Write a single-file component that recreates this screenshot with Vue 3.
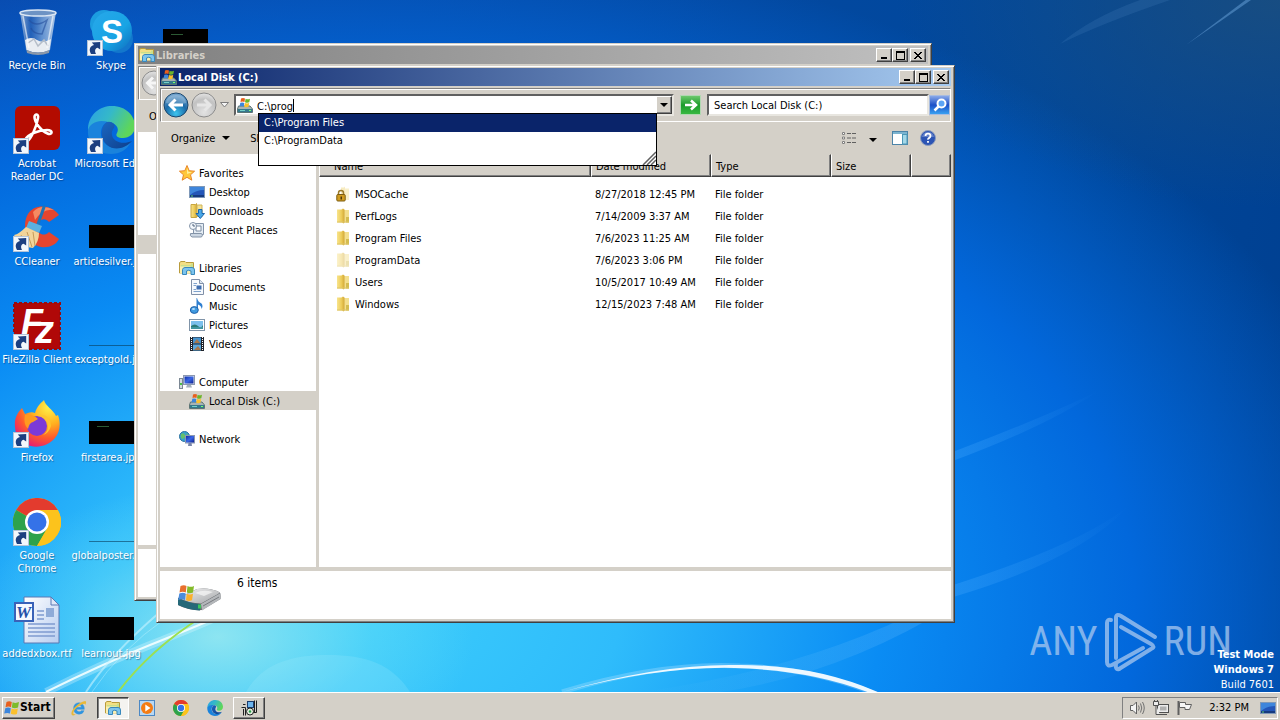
<script setup>
import { ref } from 'vue';

const address = ref('C:\\prog');
const search = ref('Search Local Disk (C:)');

const suggestions = ['C:\\Program Files', 'C:\\ProgramData'];
const activeSuggestion = ref(0);

const desktopIcons = [
  { label: 'Recycle Bin', icon: 'bin' },
  { label: 'Acrobat\nReader DC', icon: 'acrobat', shortcut: true },
  { label: 'CCleaner', icon: 'ccleaner', shortcut: true },
  { label: 'FileZilla Client', icon: 'filezilla', shortcut: true },
  { label: 'Firefox', icon: 'firefox', shortcut: true },
  { label: 'Google\nChrome', icon: 'chrome', shortcut: true },
  { label: 'addedxbox.rtf', icon: 'word' },
  { label: 'Skype', icon: 'skype', shortcut: true },
  { label: 'Microsoft Edge', icon: 'edge', shortcut: true },
  { label: 'articlesilver.jpg', thumb: 'dark' },
  { label: 'exceptgold.jpg', thumb: 'line' },
  { label: 'firstarea.jpg', thumb: 'dark', mark: true },
  { label: 'globalposter.jpg', thumb: 'line' },
  { label: 'learnout.jpg', thumb: 'dark' },
  { label: '', thumb: 'dark', mark: true }
];

const places = [
  {
    label: 'Favorites',
    icon: 'star',
    children: [
      { label: 'Desktop', icon: 'desktop' },
      { label: 'Downloads', icon: 'downloads' },
      { label: 'Recent Places', icon: 'recent' }
    ]
  },
  {
    label: 'Libraries',
    icon: 'libraries',
    children: [
      { label: 'Documents', icon: 'document' },
      { label: 'Music', icon: 'music' },
      { label: 'Pictures', icon: 'picture' },
      { label: 'Videos', icon: 'video' }
    ]
  },
  {
    label: 'Computer',
    icon: 'computer',
    children: [{ label: 'Local Disk (C:)', icon: 'disk', selected: true }]
  },
  { label: 'Network', icon: 'network', children: [] }
];

const files = [
  { name: 'MSOCache', date: '8/27/2018 12:45 PM', icon: 'folder-lock' },
  { name: 'PerfLogs', date: '7/14/2009 3:37 AM', icon: 'folder' },
  { name: 'Program Files', date: '7/6/2023 11:25 AM', icon: 'folder' },
  { name: 'ProgramData', date: '7/6/2023 3:06 PM', icon: 'folder', hidden: true },
  { name: 'Users', date: '10/5/2017 10:49 AM', icon: 'folder' },
  { name: 'Windows', date: '12/15/2023 7:48 AM', icon: 'folder' }
];

const quickLaunch = [
  { label: 'Internet Explorer', icon: 'ie' },
  { label: 'Windows Explorer', icon: 'libraries', state: 'pressed' },
  { label: 'Windows Media Player', icon: 'wmp' },
  { label: 'Google Chrome', icon: 'chrome' },
  { label: 'Microsoft Edge', icon: 'edge' },
  { label: 'Setup', icon: 'setup', state: 'raised' }
];

const pickSuggestion = (index) => {
  activeSuggestion.value = index;
  address.value = suggestions[index];
};
</script>

<template>
  <div class="screen">
    <!-- Shared icon shapes -->
    <svg class="sprite" width="0" height="0" aria-hidden="true">
      <defs>
        <linearGradient id="g-glass" x1="0" x2="1" y1="0" y2="0">
          <stop offset="0" stop-color="#b9cbe0" stop-opacity=".8" />
          <stop offset=".3" stop-color="#3c6cb4" stop-opacity=".5" />
          <stop offset=".6" stop-color="#9ab8dc" stop-opacity=".6" />
          <stop offset="1" stop-color="#dbe6f2" stop-opacity=".8" />
        </linearGradient>
        <linearGradient id="g-skype" x1="0" x2="1" y1="0" y2="1">
          <stop offset="0" stop-color="#28a8ea" />
          <stop offset=".6" stop-color="#18a4e4" />
          <stop offset="1" stop-color="#0f6cbd" />
        </linearGradient>
        <linearGradient id="g-edge" x1="0" x2="1" y1="0" y2=".4">
          <stop offset="0" stop-color="#2a9fe6" />
          <stop offset=".5" stop-color="#35b9c8" />
          <stop offset="1" stop-color="#5ed65a" />
        </linearGradient>
        <linearGradient id="g-edge-low" x1="0" x2="1" y1="0" y2="1">
          <stop offset="0" stop-color="#1b66c0" />
          <stop offset="1" stop-color="#0d3f8c" />
        </linearGradient>
        <radialGradient id="g-fox" cx=".75" cy=".15" r=".95">
          <stop offset="0" stop-color="#fff24a" />
          <stop offset=".4" stop-color="#ffb01f" />
          <stop offset=".7" stop-color="#ff5a2c" />
          <stop offset="1" stop-color="#e3197a" />
        </radialGradient>
        <linearGradient id="g-folder" x1="0" x2="1" y1="0" y2="0">
          <stop offset="0" stop-color="#f8e48c" />
          <stop offset=".6" stop-color="#eccb58" />
          <stop offset="1" stop-color="#d2a838" />
        </linearGradient>
        <linearGradient id="g-screen" x1="0" x2="1" y1="0" y2="1">
          <stop offset="0" stop-color="#0f2fa8" />
          <stop offset=".5" stop-color="#3b67e6" />
          <stop offset="1" stop-color="#0c1f8e" />
        </linearGradient>
        <linearGradient id="g-metal" x1="0" x2="1" y1="0" y2="1">
          <stop offset="0" stop-color="#f4f4f4" />
          <stop offset="1" stop-color="#a4a6a9" />
        </linearGradient>
        <radialGradient id="g-nav" cx=".5" cy=".85" r=".9">
          <stop offset="0" stop-color="#3cc4ee" />
          <stop offset=".5" stop-color="#1c6aa8" />
          <stop offset="1" stop-color="#8ab4d8" />
        </radialGradient>
        <radialGradient id="g-nav-off" cx=".5" cy=".8" r=".9">
          <stop offset="0" stop-color="#e2e2e2" />
          <stop offset=".6" stop-color="#c2c2c2" />
          <stop offset="1" stop-color="#f2f2f2" />
        </radialGradient>
        <linearGradient id="g-word" x1="0" x2="1" y1="0" y2="1">
          <stop offset="0" stop-color="#ffffff" />
          <stop offset="1" stop-color="#b8cdf0" />
        </linearGradient>
        <linearGradient id="g-beam" x1="0" x2="1" y1="0" y2="0">
          <stop offset="0" stop-color="#9cd8ff" stop-opacity="0" />
          <stop offset="1" stop-color="#7cc8ff" stop-opacity=".22" />
        </linearGradient>
        <linearGradient id="g-beam-out" x1="0" x2="1" y1="0" y2="0">
          <stop offset="0" stop-color="#4cacff" stop-opacity=".3" />
          <stop offset="1" stop-color="#4cacff" stop-opacity="0" />
        </linearGradient>

        <symbol id="i-flag" viewBox="0 0 16 16">
          <path d="M2.500 2Q5 .5 7.800 1.900L7 7.200Q4.500 6 1.500 7.300Z" fill="#e8601e" />
          <path d="M8.600 2.200Q11.500 3.700 15 2.100L14 7.600Q10.500 9 7.800 7.500Z" fill="#7dbb2a" />
          <path d="M1.300 8.200Q4 7 6.800 8.200L6 13.500Q3.300 12.300 .2 13.500Z" fill="#3c86dc" />
          <path d="M7.600 8.500Q10.400 10 13.800 8.500L12.900 13.900Q9.500 15.300 6.800 13.800Z" fill="#fbc02c" />
        </symbol>

        <symbol id="i-shortcut" viewBox="0 0 16 16">
          <rect x=".5" y=".5" width="15" height="15" fill="#f3f7fc" stroke="#b4c4d8" />
          <path d="M4 14C1.500 9.500 3 6 7 5L4.800 2.500L13.200 2L13.200 9.500L10.600 7.800C8 8.500 7.400 11 9 14Z" fill="#1d3f80" />
        </symbol>

        <symbol id="i-bin" viewBox="0 0 48 48">
          <path d="M7 4H43L37 42Q25 48 13 42Z" fill="url(#g-glass)" />
          <path d="M12 32Q18 28 24 32T38 31L36.500 42Q25 47 13.500 42Z" fill="#e9edf2" />
          <path d="M15 35L21 31L25 38L31 32L35 38" fill="none" stroke="#b5bdc8" stroke-width="1.500" />
          <ellipse cx="25" cy="5" rx="18" ry="3" fill="#6d93c4" stroke="#dce7f4" stroke-width="1.500" />
          <path d="M13.500 42Q25 47 36.500 42L36 45Q25 49 14 45Z" fill="#8c98a8" />
          <path d="M16 12Q23 20 34 12L29 26Q20 26 18 20" fill="none" stroke="#244f9c" stroke-opacity=".6" stroke-width="1.500" />
          <path d="M10 8L16 40M40 8L34 40" stroke="#fff" stroke-opacity=".6" stroke-width="1.500" />
        </symbol>

        <symbol id="i-acrobat" viewBox="0 0 48 48">
          <rect x="2" y="0" width="45" height="44" rx="6" fill="#b30b00" />
          <path d="M12 34C15 28 26 24 34 24C41 24 39 29.500 34.500 27.500C28 25 21.500 16 21.500 11C21.500 7.500 26 7.500 25 12C23.500 21 18 33 14 35.500C12 36.500 11 35.500 12 34Z" fill="none" stroke="#fff" stroke-width="2.600" />
        </symbol>

        <symbol id="i-ccleaner" viewBox="0 0 48 48">
          <path d="M46 11C38 0 21 0 15 10C8 22 14 40 28 43C36 44 43 41 46 35L36 28C31 33 25 30 24 24C23 17 31 12 36 18Z" fill="#e5452f" />
          <path d="M20 8Q28 -1 41 6Q30 4 22 16Z" fill="#f58a62" />
          <path d="M31 3L25 20" stroke="#1d74b8" stroke-width="3" stroke-linecap="round" />
          <path d="M16 17L29 22L26 29L13 24Z" fill="#5ab0e0" />
          <path d="M13 23Q6 30 1 31Q8 44 20 44Q26 38 26 29Z" fill="#f2d49a" />
          <path d="M8 31L14 42M14 28L19 43M20 28L22 42" stroke="#c79a58" />
        </symbol>

        <symbol id="i-filezilla" viewBox="0 0 48 48">
          <rect x="1" y="1" width="46" height="46" fill="#b00808" stroke="#9c0a0a" stroke-width="2" stroke-dasharray="3 2" />
          <text x="8" y="33" class="glyph-f">F</text>
          <text x="22" y="41" class="glyph-z">z</text>
        </symbol>

        <symbol id="i-firefox" viewBox="0 0 48 48">
          <path d="M2 27C1 18 5 12 9 8L12 14Q18 11 22 13C24 6 28 3 31 0C32 6 40 9 43 16L45 15C48 23 47 32 42 38C32 50 13 49 5 38Q2 33 2 27Z" fill="url(#g-fox)" />
          <circle cx="24" cy="26" r="10" fill="#7b3ad8" />
          <path d="M12 15Q19 13 25 19L20 22Q16 23 15 29Q10 24 12 15Z" fill="#ff9a1f" />
          <path d="M24 16Q34 16 35 26Q35 32 30 35Q36 33 38 26Q38 18 31 15Z" fill="#ffc52f" />
        </symbol>

        <symbol id="i-chrome" viewBox="0 0 48 48">
          <circle cx="24" cy="24" r="24" fill="#fbc116" />
          <path d="M24 24L3.200 12A24 24 0 0 1 44.800 12Z" fill="#e33b2e" />
          <path d="M24 24L3.200 12A24 24 0 0 0 24 48L34.400 30Z" fill="#2da24c" />
          <path d="M24 12H44.800A24 24 0 0 1 24 48L34.400 30Z" fill="#fcc31c" />
          <circle cx="24" cy="24" r="12" fill="#fff" />
          <circle cx="24" cy="24" r="9.500" fill="#3572e8" />
        </symbol>

        <symbol id="i-word" viewBox="0 0 48 48">
          <path d="M11 1H38L46 9V47H11Z" fill="url(#g-word)" stroke="#5a78b4" />
          <path d="M38 1V9H46Z" fill="#dfe8f8" stroke="#5a78b4" />
          <path d="M24 15H31M24 19H31M24 23H31M15 28H42M15 32H42M15 36H42M15 40H42" stroke="#7f9ad0" stroke-width="1.500" />
          <rect x="33" y="12" width="8" height="9" fill="#8fabd8" />
          <rect x="2" y="7" width="18" height="18" fill="#f6f9ff" stroke="#3a62b8" stroke-width="2" />
          <text x="3" y="22" class="glyph-w">W</text>
        </symbol>

        <symbol id="i-skype" viewBox="0 0 48 48">
          <circle cx="17" cy="16" r="14" fill="#1c9de0" />
          <circle cx="32" cy="31" r="14" fill="#1377cc" />
          <circle cx="25" cy="23" r="20" fill="url(#g-skype)" />
          <text x="25" y="35" class="glyph-s">S</text>
        </symbol>

        <symbol id="i-edge" viewBox="0 0 48 48">
          <path d="M1 22C2 8 13 0 25 0C39 0 48 10 48 20C48 28 42 32 36 32C31 32 28 30 30 27C33 22 28 16 21 16C11 15 4 19 1 26Z" fill="url(#g-edge)" />
          <path d="M1 24C3 17 12 13 20 16C14 19 12 28 16 35C22 44 35 44 44 36C40 44 33 48 24 48C10 48 0 37 1 24Z" fill="#1a83dc" />
          <path d="M20 16C13 20 13 33 20 39C27 45 38 43 45 35C36 39 26 36 25 29C24 23 29 22 27 18Q24 15 20 16Z" fill="url(#g-edge-low)" />
        </symbol>

        <symbol id="i-libraries" viewBox="0 0 16 16">
          <path d="M.5 2.500L2 1.500H6L7 2.500H14.500V13H.5Z" fill="#f3df84" stroke="#b99b3c" />
          <path d="M2 5H12V3.500H14V10H2Z" fill="#c9df8c" />
          <path d="M1 6.500H11.500L12 13.500H1Z" fill="#fbf0b2" />
          <path d="M3.500 14.500V9.500Q4 7.500 6 7.500H13Q15.500 7.500 15.500 10V14.500H12V11Q9.500 9.500 7.500 11V14.500Z" fill="#7cc4ee" stroke="#3888bc" />
        </symbol>

        <symbol id="i-disk" viewBox="0 0 16 16">
          <path d="M1.500 9H13L15.500 12V15.500H.5V12Z" fill="#a8b4b4" stroke="#5c7474" />
          <rect x="1" y="12" width="14" height="3" fill="#35798c" />
          <path d="M3 13.500H8" stroke="#74d0c8" />
          <rect x="12" y="13" width="2" height="1" fill="#7cff6c" />
          <path d="M4 1.500Q6 .5 8 1.500L7.500 5Q5.500 4.200 3.500 5Z" fill="#e8601e" />
          <path d="M8.600 1.700Q10.500 2.700 13 1.700L12.300 5.300Q10.200 6.200 8 5.200Z" fill="#6cb52a" />
          <path d="M3.300 5.800Q5.300 5 7.300 5.900L6.800 9.400Q4.800 8.600 2.600 9.400Z" fill="#3c86dc" />
          <path d="M7.900 6.100Q10 7 12.200 6.100L11.500 9.800Q9.400 10.700 7.200 9.700Z" fill="#fbc02c" />
        </symbol>

        <symbol id="i-star" viewBox="0 0 16 16">
          <path d="M8 .5L10.200 5.700L15.600 6.200L11.500 9.800L12.800 15.200L8 12.300L3.200 15.200L4.500 9.800L.4 6.200L5.800 5.700Z" fill="#ffc83c" stroke="#e8862a" />
          <path d="M8 3L9.300 6.700L13 7.200L8 9Z" fill="#fff09a" />
        </symbol>

        <symbol id="i-desktop" viewBox="0 0 16 16">
          <rect x=".5" y="2.500" width="15" height="11" fill="#2456b8" stroke="#7e98b8" />
          <path d="M1 3H15V6Q7 6 1 11Z" fill="#3f86dc" />
          <path d="M1 12H15" stroke="#163a80" stroke-width="2" />
          <path d="M2 12H4" stroke="#5dd070" />
        </symbol>

        <symbol id="i-downloads" viewBox="0 0 16 16">
          <path d="M2 1.500H6.500L7.500 .5V14.500H2Z" fill="url(#g-folder)" stroke="#c8a640" />
          <path d="M8 2H13V13.500H8Z" fill="#f4e294" stroke="#d0b458" />
          <path d="M9.500 6.500H13V10.500H15.500L11.300 15.500L7 10.500H9.500Z" fill="#4aa8e8" stroke="#1c66ac" />
        </symbol>

        <symbol id="i-recent" viewBox="0 0 16 16">
          <path d="M4.500 1.500H14.500V12.500H4.500Z" fill="#e4ecf4" stroke="#8494a8" />
          <path d="M1.500 11.500H12.500Q14.500 13 12.500 15H3Q.5 14 1.500 11.500Z" fill="#cbd6e2" stroke="#8494a8" />
          <path d="M7 4H12V9H7Z" fill="#fff" stroke="#788aa0" />
          <circle cx="4" cy="4" r="3.500" fill="#f4f8fc" stroke="#8494a8" />
          <path d="M4 2V4H6" fill="none" stroke="#50647c" />
        </symbol>

        <symbol id="i-document" viewBox="0 0 16 16">
          <path d="M2.500 .5H10.500L14.500 4.500V15.500H2.500Z" fill="#f6f9fd" stroke="#8090a8" />
          <path d="M10.500 .5V4.500H14.500" fill="#dbe5f1" stroke="#8090a8" />
          <path d="M4.500 4.500H8M4.500 6.500H7M4.500 12.500H12M4.500 10.500H7" stroke="#7fa2cc" />
          <rect x="7.500" y="6.500" width="5" height="4" fill="#3d6db0" />
        </symbol>

        <symbol id="i-music" viewBox="0 0 16 16">
          <path d="M8 0Q9 4 12.500 5.500Q14.500 8 12.500 11Q12.500 7.500 9 6.500V12.500H7.500V0Z" fill="#2f7fd0" />
          <ellipse cx="5.300" cy="12" rx="4" ry="3.400" fill="#3f9ae0" stroke="#2260a8" />
          <ellipse cx="4.500" cy="11" rx="1.500" ry="1" fill="#b8e0ff" />
        </symbol>

        <symbol id="i-picture" viewBox="0 0 16 16">
          <rect x=".5" y="2.500" width="15" height="11" fill="#fff" stroke="#8094a8" />
          <rect x="2" y="4" width="12" height="8" fill="#7cc0ec" />
          <path d="M2 9Q6 6 9 9T14 8V12H2Z" fill="#2c7c78" />
          <path d="M2 11H14" stroke="#55b0c8" />
        </symbol>

        <symbol id="i-video" viewBox="0 0 16 16">
          <rect x="1" y="1" width="14" height="14" fill="#20242c" />
          <rect x="4" y="1.500" width="8" height="6" fill="#4694d0" />
          <rect x="4" y="8.500" width="8" height="6" fill="#5ca8dc" />
          <path d="M5 7L8 3L11 7ZM5 14L9 10L12 14Z" fill="#a8784c" />
          <path d="M2.500 1V15M13.500 1V15" stroke="#fff" stroke-dasharray="1 1" />
        </symbol>

        <symbol id="i-computer" viewBox="0 0 16 16">
          <rect x=".5" y="4.500" width="3" height="10" fill="#d4dae0" stroke="#7c8894" />
          <rect x="1" y="9" width="2" height="2" fill="#48c048" />
          <rect x="4.500" y="1.500" width="11" height="9" fill="#dfe4ec" stroke="#8c98b0" />
          <rect x="5.500" y="2.500" width="9" height="7" fill="url(#g-screen)" />
          <path d="M8 11H12L13 13.500H7Z" fill="#a4b0bc" />
        </symbol>

        <symbol id="i-network" viewBox="0 0 16 16">
          <circle cx="5.500" cy="5.500" r="5" fill="#38a0d0" stroke="#2870a0" />
          <path d="M2 3Q5 1 6 4T3 8Q1 6 2 3ZM7 2Q10 3 9 6Z" fill="#64c06c" />
          <rect x="6.500" y="4.500" width="9" height="7.500" fill="#dfe4ec" stroke="#8c98b0" />
          <rect x="7" y="5" width="8" height="6.500" fill="url(#g-screen)" />
          <path d="M9.500 12H12.500L13 15H9Z" fill="#7884a8" />
        </symbol>

        <symbol id="i-folder" viewBox="0 0 16 16">
          <path d="M8 2H14V14.500H8Z" fill="#f3df8e" />
          <path d="M11 9H14V14.500H11Z" fill="#d4bc50" />
          <path d="M2 1.500H6.500L8 .5L9.500 1.500V14.500L8.500 15.500L7 14.500H2Z" fill="url(#g-folder)" />
          <path d="M2 14H14" stroke="#dcc468" />
        </symbol>

        <symbol id="i-folder-lock" viewBox="0 0 16 16">
          <g opacity=".45">
            <path d="M6 1.500H9L10 .5V14H6Z" fill="#eed476" />
            <path d="M10 2.500H14V14H10Z" fill="#f2de8c" />
          </g>
          <path d="M3.500 9V7Q3.500 4.500 6 4.500T8.500 7V9" fill="none" stroke="#9c7c2c" stroke-width="1.500" />
          <rect x="1.800" y="8.500" width="8.400" height="6.500" rx="1" fill="#d09c20" stroke="#7c5c10" />
          <rect x="5.500" y="10.500" width="1.500" height="3" fill="#4c380c" />
        </symbol>

        <symbol id="i-ie" viewBox="2 1 17 18">
          <path d="M16.500 11.500H7.500Q8 14.300 10.500 14.300Q12.300 14.300 13 13H16.200Q14.800 17 10.500 17Q4.500 16.500 4.300 10.500Q4.700 4.300 10.500 4Q16.500 4.500 16.500 11.500ZM7.600 9.200H13.300Q12.800 6.800 10.500 6.700Q8.100 6.800 7.600 9.200Z" fill="#2f94e0" stroke="#2f94e0" stroke-width=".5" />
          <path d="M2.500 18Q.5 15 6 9T17.500 2Q19.500 3 17.500 6.500Q17.500 3.500 11 7.500T4 16Q4.500 17.500 7 17Q4 19 2.500 18Z" fill="#e8b838" />
        </symbol>

        <symbol id="i-wmp" viewBox="0 0 16 16">
          <rect x=".5" y=".5" width="15" height="15" fill="#b8d8f4" stroke="#4c88c4" />
          <circle cx="8" cy="8" r="6" fill="#f47c14" />
          <path d="M6.300 4.500L11.500 8L6.300 11.500Z" fill="#fff" />
        </symbol>

        <symbol id="i-setup" viewBox="0 0 16 16">
          <rect x="6.500" y="1.500" width="6" height="6" fill="#6cb4ec" stroke="#1c3c6c" />
          <path d="M13.500 .5V12.500M15.500 .5V12.500H12M2 4.500H4.500M.5 7.500H4.500V15.500M2.500 9V15.500" fill="none" stroke="#202020" />
          <circle cx="9" cy="11.500" r="3.500" fill="#e0ecdc" stroke="#202020" />
          <circle cx="9" cy="11.500" r="1.200" fill="#28a048" />
        </symbol>
      </defs>
    </svg>

    <main class="desktop">
      <svg class="streaks" viewBox="0 0 1280 692" preserveAspectRatio="none" aria-hidden="true">
        <path d="M640 692Q820 668 955 592L955 604Q840 675 720 692Z" fill="url(#g-beam)" />
        <path d="M950 453Q1050 415 1100 390Q1050 425 950 462Z" fill="url(#g-beam-out)" />
        <path d="M950 586Q1080 545 1130 505Q1080 560 950 598Z" fill="url(#g-beam-out)" />
        <path d="M1060 44Q1090 18 1140 0H1170Q1100 24 1060 44Z" fill="#6aa4dc" fill-opacity=".14" />
        <path d="M1186 45L1247 -1L1251 0Z" fill="#6aa4dc" fill-opacity=".5" />
        <g fill="none">
          <path d="M46 692Q100 665 150 645T215 618" stroke="#eafcff" stroke-opacity=".3" stroke-width="8" />
          <path d="M46 692Q100 665 150 645T215 618" stroke="#f4ffff" stroke-opacity=".9" stroke-width="2" />
          <path d="M86 692Q110 655 160 612" stroke="#c8f4ff" stroke-opacity=".6" stroke-width="2" />
          <path d="M92 692Q120 650 166 618" stroke="#c8f4ff" stroke-opacity=".4" stroke-width="1" />
          <path d="M118 692Q150 650 200 618" stroke="#9ce050" stroke-width="2" />
          <path d="M562 692Q660 662 740 666Q812 668 876 694" stroke="#a8e0ff" stroke-opacity=".35" stroke-width="5" />
        </g>
        <path d="M562 692Q660 664 735 665Q815 664 880 693H870Q812 670 735 668Q660 666 562 692Z" fill="#fff" fill-opacity=".9" />
        <path d="M246 692C262 664 290 655 328 655S392 664 410 692Z" fill="#b8f0ff" fill-opacity=".16" />
      </svg>

      <ul class="icon-grid">
        <li v-for="(item, index) in desktopIcons" :key="index">
          <a class="desk-icon" href="#" :aria-label="item.label || 'Image'" @click.prevent>
            <span class="desk-art">
              <svg v-if="item.icon" class="art"><use :href="'#i-' + item.icon" /></svg>
              <span v-else class="thumb" :class="item.thumb">
                <i v-if="item.mark" class="mark"></i>
              </span>
              <svg v-if="item.shortcut" class="overlay"><use href="#i-shortcut" /></svg>
            </span>
            <span class="desk-label">{{ item.label }}</span>
          </a>
        </li>
      </ul>

      <!-- Background window -->
      <section class="window libraries-window" aria-label="Libraries">
        <header class="titlebar inactive">
          <svg class="icon"><use href="#i-libraries" /></svg>
          <h2>Libraries</h2>
          <div class="caption">
            <button aria-label="Minimize"><i class="cap-min"></i></button>
            <button aria-label="Maximize"><i class="cap-max"></i></button>
            <button class="close" aria-label="Close">
              <svg viewBox="0 0 8 7"><path d="M0 0L7 7M1 0L8 7M8 0L1 7M7 0L0 7" /></svg>
            </button>
          </div>
        </header>
        <div class="navband">
          <button class="round" aria-label="Back">
            <svg viewBox="0 0 26 26"><circle cx="13" cy="13" r="12" fill="url(#g-nav-off)" stroke="#8c8c8c" /><path d="M12 7.500L6.500 13L12 18.500M7 13H19" fill="none" stroke="#f6f6f6" stroke-width="3" /></svg>
          </button>
        </div>
        <div class="toolbar"><button class="text-button">Organize</button></div>
        <div class="back-body"><div class="back-row"></div></div>
        <div class="back-details"></div>
      </section>

      <!-- Foreground window -->
      <section class="window disk-window" aria-label="Local Disk (C:)">
        <header class="titlebar">
          <svg class="icon"><use href="#i-disk" /></svg>
          <h1>Local Disk (C:)</h1>
          <div class="caption">
            <button aria-label="Minimize"><i class="cap-min"></i></button>
            <button aria-label="Maximize"><i class="cap-max"></i></button>
            <button class="close" aria-label="Close">
              <svg viewBox="0 0 8 7"><path d="M0 0L7 7M1 0L8 7M8 0L1 7M7 0L0 7" /></svg>
            </button>
          </div>
        </header>

        <div class="navband">
          <button class="round" aria-label="Back">
            <svg viewBox="0 0 26 26"><circle cx="13" cy="13" r="12" fill="url(#g-nav)" stroke="#1c466c" /><path d="M3 11Q4 3 13 3T23 11Q13 14 3 11Z" fill="#fff" fill-opacity=".25" /><path d="M12.500 7.500L7 13L12.500 18.500M7.500 13H20" fill="none" stroke="#fff" stroke-width="3" /></svg>
          </button>
          <button class="round" aria-label="Forward">
            <svg viewBox="0 0 26 26"><circle cx="13" cy="13" r="12" fill="url(#g-nav-off)" stroke="#8c8c8c" /><path d="M13.500 7.500L19 13L13.500 18.500M18.500 13H6" fill="none" stroke="#e6e6e6" stroke-width="3" /></svg>
          </button>
          <button class="history" aria-label="Recent pages">
            <svg viewBox="0 0 9 6"><path d="M.5 .5H8.500L4.500 5Z" fill="#f4f4f4" stroke="#7c7c7c" /></svg>
          </button>

          <div class="address">
            <svg class="icon"><use href="#i-disk" /></svg>
            <input v-model="address" class="address-input" type="text" size="7" aria-label="Address" spellcheck="false" />
            <i class="caret"></i>
            <button class="combo" aria-label="Previous locations"><i class="down"></i></button>
            <ul class="suggest">
              <li v-for="(entry, index) in suggestions" :key="entry">
                <button :class="{ active: index === activeSuggestion }" @click="pickSuggestion(index)">{{ entry }}</button>
              </li>
              <li class="grip">
                <svg viewBox="0 0 14 14"><path d="M1 14L14 1M5 14L14 5M9 14L14 9" stroke="#606060" stroke-width="1.500" /></svg>
              </li>
            </ul>
          </div>

          <button class="go" aria-label="Go">
            <svg viewBox="0 0 16 14"><path d="M2 7H12M8 2.500L13 7L8 11.500" fill="none" stroke="#fff" stroke-width="2.500" /></svg>
          </button>
          <input v-model="search" class="search-input" type="text" aria-label="Search Local Disk (C:)" spellcheck="false" />
          <button class="search-button" aria-label="Search">
            <svg viewBox="0 0 16 16"><circle cx="9.500" cy="6.500" r="4" fill="#5ca4f4" stroke="#fff" stroke-width="2" /><path d="M6.500 9.500L2.500 13.500" stroke="#fff" stroke-width="2.500" /></svg>
          </button>
        </div>

        <div class="toolbar">
          <button class="text-button">Organize <i class="down"></i></button>
          <button class="text-button">Share with</button>
          <div class="tools">
            <button aria-label="Change your view">
              <svg width="16" height="14" viewBox="0 0 16 14"><path d="M1.500 1.500H3.500V3.500H1.500ZM1.500 6H3.500V8H1.500ZM1.500 10.500H3.500V12.500H1.500Z" fill="#fff" stroke="#808080" /><path d="M6 2.500H10M11 2.500H15M6 7H10M11 7H15M6 11.500H10M11 11.500H15" stroke="#606060" /></svg>
            </button>
            <button aria-label="More view options"><i class="down"></i></button>
            <button aria-label="Preview pane">
              <svg width="16" height="14" viewBox="0 0 16 14"><rect x=".5" y=".5" width="15" height="13" fill="#fff" stroke="#4c84a8" /><path d="M1 2H15" stroke="#7cb4d0" stroke-width="2" /><rect x="10.500" y="3.500" width="4.500" height="9.500" fill="#a4d8e8" stroke="#4c98b8" /></svg>
            </button>
            <button aria-label="Help">
              <svg width="16" height="16" viewBox="0 0 16 16"><circle cx="8" cy="8" r="7.500" fill="#2c54b4" stroke="#8c9cbc" /><path d="M2 7Q3 2 8 2T14 7Z" fill="#fff" fill-opacity=".25" /><path d="M5.500 6Q5.500 3.700 8 3.700T10.500 6Q10.500 7.200 9.200 7.900T8 9.600M8 11V12.800" fill="none" stroke="#fff" stroke-width="1.800" /></svg>
            </button>
          </div>
        </div>

        <div class="body">
          <nav class="places" aria-label="Places">
            <ul v-for="group in places" :key="group.label" class="group">
              <li>
                <a href="#" @click.prevent><svg class="icon"><use :href="'#i-' + group.icon" /></svg>{{ group.label }}</a>
              </li>
              <li v-for="place in group.children" :key="place.label">
                <a href="#" class="child" :class="{ selected: place.selected }" @click.prevent>
                  <svg class="icon"><use :href="'#i-' + place.icon" /></svg>{{ place.label }}
                </a>
              </li>
            </ul>
          </nav>

          <div class="files">
            <table>
              <colgroup>
                <col class="col-name" />
                <col class="col-date" />
                <col class="col-type" />
                <col class="col-size" />
                <col />
              </colgroup>
              <thead>
                <tr>
                  <th class="first">Name</th>
                  <th>Date modified</th>
                  <th>Type</th>
                  <th>Size</th>
                  <th></th>
                </tr>
              </thead>
              <tbody>
                <tr v-for="file in files" :key="file.name">
                  <td>
                    <span class="file-name">
                      <svg class="icon" :class="{ faded: file.hidden }"><use :href="'#i-' + file.icon" /></svg>{{ file.name }}
                    </span>
                  </td>
                  <td>{{ file.date }}</td>
                  <td>File folder</td>
                  <td></td>
                  <td></td>
                </tr>
              </tbody>
            </table>
          </div>
        </div>

        <footer class="details">
          <svg class="drive" viewBox="0 0 44 28">
            <path d="M1 14L20 5Q32 3 42 8Q44 9 43.500 15L25 26Q12 27 1 21Z" fill="#66696e" />
            <path d="M2 14L20 5Q32 3 42 8Q43 9 41 10L24 19.500Q12 19 2 14Z" fill="url(#g-metal)" />
            <path d="M18 9Q26 5 36 8L27 12Z" fill="#f8f8f8" fill-opacity=".7" />
            <path d="M1 14Q12 19.500 23 20V26.500Q12 26 1 21Z" fill="#256878" />
            <path d="M24 20L43.500 9V15L25 26.500Z" fill="#b4b7ba" />
            <path d="M26 22L42 13" stroke="#787b80" />
            <rect x="21" y="20.500" width="3" height="4" fill="#3cc85c" />
            <path d="M3.500 2Q7 .3 9.500 2L8.800 8.500Q5.500 7 2.500 8.500Z" fill="#e8702e" />
            <path d="M10.500 2Q13.500 3.700 17 2L16 8.500Q12.500 10 9.800 8.500Z" fill="#84bb2a" />
            <path d="M2.300 9.500Q6 8 8.700 9.500L8 16Q4.500 14.500 1.200 16Z" fill="#4c8cdc" />
            <path d="M9.700 9.700Q12.500 11.200 16 9.700L15 16.200Q12 17.700 9 16.200Z" fill="#fbb02c" />
          </svg>
          <p>6 items</p>
        </footer>
      </section>

      <div class="watermark" aria-label="ANY RUN">
        <span>ANY</span>
        <svg viewBox="0 0 54 60">
          <g fill="none" stroke="#a9c8ef" stroke-width="4" stroke-linejoin="round" stroke-linecap="round">
            <path d="M7 8Q3 7 3 11V50Q3 55 8 53L39 36" />
            <path d="M51 25L17 4Q12 1 12 6V46" />
            <path d="M17 15L47 32Q52 35 47 37L15 57" />
            <path d="M15 57Q11 58 12 52" />
          </g>
        </svg>
        <span>RUN</span>
      </div>
      <div class="build">
        <strong>Test Mode</strong>
        <strong>Windows 7</strong>
        <span>Build 7601</span>
      </div>
    </main>

    <footer class="taskbar">
      <button class="start"><svg class="start-flag"><use href="#i-flag" /></svg>Start</button>
      <div class="launch">
        <button v-for="item in quickLaunch" :key="item.label" :class="item.state" :aria-label="item.label">
          <svg><use :href="'#i-' + item.icon" /></svg>
        </button>
      </div>
      <div class="tray">
        <button aria-label="Volume">
          <svg viewBox="0 0 16 16"><path d="M1.500 5.500H4L7.500 2V14L4 10.500H1.500Z" fill="#f4f4f4" stroke="#606060" /><path d="M9.500 5.500Q11 8 9.500 10.500M11.500 3.500Q14 8 11.500 12.500M13.500 2Q17 8 13.500 14" fill="none" stroke="#707070" /></svg>
        </button>
        <button aria-label="Network">
          <svg viewBox="0 0 16 16"><rect x="4.500" y="4.500" width="11" height="8" fill="#ececec" stroke="#505050" /><rect x="7" y="6.500" width="6.500" height="4" fill="#b0b0b0" /><path d="M7 14.500H14" stroke="#505050" /><path d="M.5 1.500H5.500V5.500H.5ZM1.500 0V1.500M4.500 0V1.500M3 5.500V14.500H7" fill="#ececec" stroke="#505050" /></svg>
        </button>
        <button aria-label="Action Center">
          <svg viewBox="0 0 16 16"><path d="M1.500 1V15" stroke="#606060" stroke-width="2" /><path d="M2.500 2.500H8.500V4.500H14.500L12.500 9.500H8V7.500H2.500Z" fill="#f6f6f6" stroke="#606060" /></svg>
        </button>
        <time>2:32 PM</time>
        <button aria-label="Show desktop"><svg><use href="#i-desktop" /></svg></button>
      </div>
    </footer>
  </div>
</template>

<style>
body {
  margin: 0;
  overflow: hidden;
}
</style>

<style scoped>
.screen {
  --face: #d4d0c8;
  display: flex;
  flex-direction: column;
  height: 100vh;
  font-family: Tahoma, "DejaVu Sans Condensed", "Noto Sans", sans-serif;
  font-size: 11px;
  line-height: 13px;
  color: #000;
}

.screen *,
.screen *::before {
  box-sizing: border-box;
}

.sprite {
  position: absolute;
}

ul {
  list-style: none;
  margin: 0;
  padding: 0;
}

button,
input {
  font: inherit;
  color: inherit;
  margin: 0;
  padding: 0;
  border: 0;
  background: none;
  outline: none;
}

a {
  color: inherit;
  text-decoration: none;
}

svg {
  display: block;
}

.icon {
  width: 16px;
  height: 16px;
  flex: none;
}

.down {
  display: inline-block;
  border: 4px solid transparent;
  border-top-color: #000;
  border-bottom: 0;
}

/* Desktop */
.desktop {
  position: relative;
  flex: 1;
  min-height: 0;
  overflow: hidden;
  background:
    radial-gradient(ellipse 20% 22% at 17% 92%, rgba(170, 240, 238, 0.75), rgba(120, 230, 244, 0.3) 60%, transparent),
    radial-gradient(ellipse 30% 30% at 100% 0%, rgba(26, 78, 128, 0.9), transparent),
    radial-gradient(ellipse 82% 98% at 28% 88%, #3ccdfb 0%, #2fbcfb 25%, #0a8cf4 50%, #0268dc 74%, rgba(0, 76, 172, 0) 100%),
    linear-gradient(100deg, #0a48aa, #00489c 75%, #003f90);
}

.streaks {
  position: absolute;
  inset: 0;
  width: 100%;
  height: 100%;
}

.icon-grid {
  position: relative;
  display: grid;
  grid-auto-flow: column;
  grid-template-rows: repeat(7, 98px);
  grid-auto-columns: 74px;
  width: max-content;
  padding-top: 8px;
}

.desk-icon {
  display: flex;
  flex-direction: column;
  align-items: center;
  gap: 3px;
  color: #fff;
}

.desk-art {
  position: relative;
  display: flex;
  justify-content: center;
  align-items: flex-end;
  width: 48px;
  height: 48px;
}

.art {
  width: 48px;
  height: 48px;
}

.overlay {
  position: absolute;
  left: 0;
  bottom: 0;
  width: 16px;
  height: 16px;
}

.desk-label {
  white-space: pre;
  text-align: center;
  text-shadow: 1px 1px 1px rgba(0, 20, 60, 0.4);
}

.thumb {
  width: 45px;
  height: 23px;
  margin-bottom: 4px;
}

.thumb.dark {
  background: #000;
}

.thumb.line {
  border-bottom: 1px solid rgba(8, 60, 90, 0.6);
}

.mark {
  display: block;
  width: 12px;
  height: 1px;
  margin: 5px 8px;
  background: #2c5a34;
}

.glyph-f,
.glyph-z,
.glyph-w,
.glyph-s {
  font-family: "Liberation Sans", sans-serif;
  font-weight: bold;
  fill: #fff;
}

.glyph-f,
.glyph-z {
  font-style: italic;
  font-size: 36px;
}

.glyph-z {
  font-size: 38px;
}

.glyph-w {
  font-family: "Liberation Serif", serif;
  font-style: italic;
  font-size: 17px;
  fill: #2450a8;
}

.glyph-s {
  font-size: 33px;
  text-anchor: middle;
}

/* Windows */
.window {
  position: absolute;
  display: flex;
  flex-direction: column;
  padding: 2px 3px 3px;
  background: var(--face);
  border: 1px solid var(--face);
  border-right-color: #404040;
  border-bottom-color: #404040;
  box-shadow: inset 1px 1px #fff, inset -1px -1px #808080;
}

.libraries-window {
  left: 134px;
  right: 348px;
  top: 43px;
  bottom: 91px;
}

.disk-window {
  left: 156px;
  right: 325px;
  top: 65px;
  bottom: 69px;
}

.titlebar {
  display: flex;
  align-items: center;
  height: 18px;
  margin-bottom: 2px;
  padding: 0 2px 0 1px;
  color: #fff;
  background: linear-gradient(90deg, #0a246a, #a6caf0);
}

.titlebar.inactive {
  color: var(--face);
  background: linear-gradient(90deg, #808080, #c0c0c0);
}

.titlebar h1,
.titlebar h2 {
  flex: 1;
  margin: 0 0 0 1px;
  font-size: 11px;
  font-weight: bold;
}

.caption {
  display: flex;
}

.caption button,
.combo {
  display: grid;
  place-items: center;
  width: 16px;
  height: 14px;
  background: var(--face);
  border: 1px solid;
  border-color: #fff #404040 #404040 #fff;
  box-shadow: inset -1px -1px #808080;
}

.caption .close {
  margin-left: 2px;
}

.caption svg {
  width: 8px;
  height: 7px;
  stroke: #000;
}

.cap-min {
  width: 6px;
  height: 8px;
  border-bottom: 2px solid #000;
}

.cap-max {
  width: 9px;
  height: 9px;
  border: 1px solid #000;
  border-top-width: 2px;
}

.navband {
  display: flex;
  align-items: center;
  height: 34px;
  padding: 0 0 0 2px;
  border: 1px solid;
  border-color: #808080 #fff #fff #808080;
  box-shadow: inset 1px 1px #fff;
}

.round {
  width: 26px;
  height: 26px;
  margin-right: 2px;
}

.history {
  width: 9px;
  margin: 0 5px 0 1px;
}

.history svg {
  width: 9px;
  height: 6px;
}

.address,
.search-input {
  height: 22px;
  background: #fff;
  border: 2px solid;
  border-color: #606060 #e8e6e0 #e8e6e0 #606060;
}

.address {
  position: relative;
  flex: 1;
  display: flex;
  align-items: center;
  padding-left: 1px;
}

.address-input {
  field-sizing: content;
  margin-left: 4px;
  padding-top: 2px;
}

.caret {
  width: 1px;
  height: 13px;
  background: #000;
}

.combo {
  height: 18px;
  margin-left: auto;
}

.suggest {
  position: absolute;
  z-index: 2;
  left: 22px;
  right: 15px;
  top: 17px;
  height: 53px;
  background: #fff;
  border: 1px solid #000;
}

.suggest button {
  display: block;
  width: 100%;
  padding: 2px 5px;
  text-align: left;
}

.suggest button.active {
  padding-bottom: 3px;
  color: #fff;
  background: #0a246a;
}

.grip {
  position: absolute;
  right: 0;
  bottom: 0;
}

.grip svg {
  width: 14px;
  height: 14px;
}

.go {
  display: grid;
  place-items: center;
  width: 21px;
  height: 20px;
  margin: 0 6px;
  background: linear-gradient(#6cc86c, #1c9c2c 50%, #38b840);
  border: 1px solid #b0d8b0;
}

.go svg {
  width: 16px;
  height: 14px;
}

.search-input {
  flex: 0 0 222px;
  padding: 0 5px;
}

.search-button {
  display: grid;
  place-items: center;
  width: 21px;
  height: 20px;
  background: linear-gradient(#88a8e8, #1c50c8 50%, #38a0f0);
  border: 1px solid #a8bce0;
}

.search-button svg {
  width: 16px;
  height: 16px;
}

.toolbar {
  display: flex;
  align-items: center;
  height: 32px;
  padding: 0 15px 0 11px;
}

.text-button {
  display: flex;
  align-items: center;
  gap: 7px;
  margin-right: 20px;
}

.tools {
  display: flex;
  align-items: center;
  gap: 12px;
  margin-left: auto;
}

.tools button:nth-child(2) {
  margin-right: 3px;
}

.body {
  display: flex;
  flex: 1;
  min-height: 0;
}

.places {
  width: 156px;
  padding-top: 9px;
  background: #fff;
}

.group {
  padding-bottom: 19px;
}

.places a {
  display: flex;
  align-items: center;
  gap: 4px;
  height: 19px;
  padding: 1px 0 0 19px;
}

.places a.child {
  padding-left: 29px;
}

.places a.selected {
  background: var(--face);
}

.files {
  flex: 1;
  min-width: 0;
  margin-left: 3px;
  background: #fff;
}

table {
  width: 100%;
  table-layout: fixed;
  border-collapse: separate;
  border-spacing: 0;
}

.col-name {
  width: 272px;
}

.col-date,
.col-type {
  width: 120px;
}

.col-size {
  width: 80px;
}

th,
td {
  padding: 0 4px;
  text-align: left;
  font-weight: normal;
  white-space: nowrap;
}

th {
  height: 23px;
  padding-top: 2px;
  background: var(--face);
  border: 1px solid;
  border-color: var(--face) #404040 #404040 #fff;
  box-shadow: inset -1px -1px #808080;
}

th.first {
  padding-left: 14px;
}

td {
  height: 22px;
}

tbody::before {
  content: "";
  display: block;
  height: 6px;
}

.file-name {
  display: flex;
  align-items: center;
  gap: 4px;
  padding-left: 12px;
}

.faded {
  opacity: 0.45;
}

.details {
  display: flex;
  gap: 16px;
  height: 52px;
  padding-left: 17px;
  background: #fff;
  border-top: 4px solid var(--face);
}

.drive {
  width: 44px;
  height: 28px;
  margin-top: 13px;
}

.details p {
  margin: 6px 0 0;
  font-size: 12px;
}

.back-body {
  flex: 1;
  padding-top: 103px;
  background: #fff;
}

.back-row {
  width: 156px;
  height: 19px;
  background: var(--face);
}

.back-details {
  height: 52px;
  background: #fff;
  border-top: 4px solid var(--face);
}

/* Watermark and build text */
.watermark {
  position: absolute;
  right: 48px;
  bottom: 20px;
  display: flex;
  align-items: center;
  gap: 6px;
  color: #a9c8ef;
  opacity: 0.75;
  font-family: "Roboto Condensed", "Open Sans Condensed", "Liberation Sans Narrow", sans-serif;
  font-size: 40px;
  line-height: 60px;
}

.watermark svg {
  width: 54px;
  height: 60px;
}

.build {
  position: absolute;
  right: 6px;
  bottom: 0;
  display: flex;
  flex-direction: column;
  align-items: flex-end;
  color: #fff;
  line-height: 15px;
}

/* Taskbar */
.taskbar {
  display: flex;
  align-items: center;
  height: 28px;
  padding: 2px 2px 0;
  background: var(--face);
  border-top: 1px solid #fff;
}

.start {
  display: flex;
  align-items: center;
  height: 22px;
  padding: 0 3px 0 1px;
  font-size: 12px;
  font-weight: bold;
  border: 1px solid;
  border-color: #fff #404040 #404040 #fff;
  box-shadow: inset -1px -1px #808080;
}

.start-flag {
  width: 16px;
  height: 16px;
}

.launch {
  display: flex;
  gap: 2px;
  margin-left: 8px;
}

.launch button {
  display: grid;
  place-items: center;
  width: 32px;
  height: 22px;
  border: 1px solid transparent;
}

.launch svg {
  width: 16px;
  height: 16px;
}

.launch .pressed {
  background: #f4f3f0;
  border-color: #404040 #fff #fff #404040;
  box-shadow: inset 1px 1px #808080;
}

.launch .raised {
  border-color: #fff #404040 #404040 #fff;
  box-shadow: inset -1px -1px #808080;
}

.tray {
  display: flex;
  align-items: center;
  gap: 8px;
  height: 22px;
  margin-left: auto;
  padding: 0 1px 0 6px;
  border: 1px solid;
  border-color: #808080 #fff #fff #808080;
}

.tray svg {
  width: 16px;
  height: 16px;
}

.tray time {
  margin: 0 3px 0 8px;
}
</style>
